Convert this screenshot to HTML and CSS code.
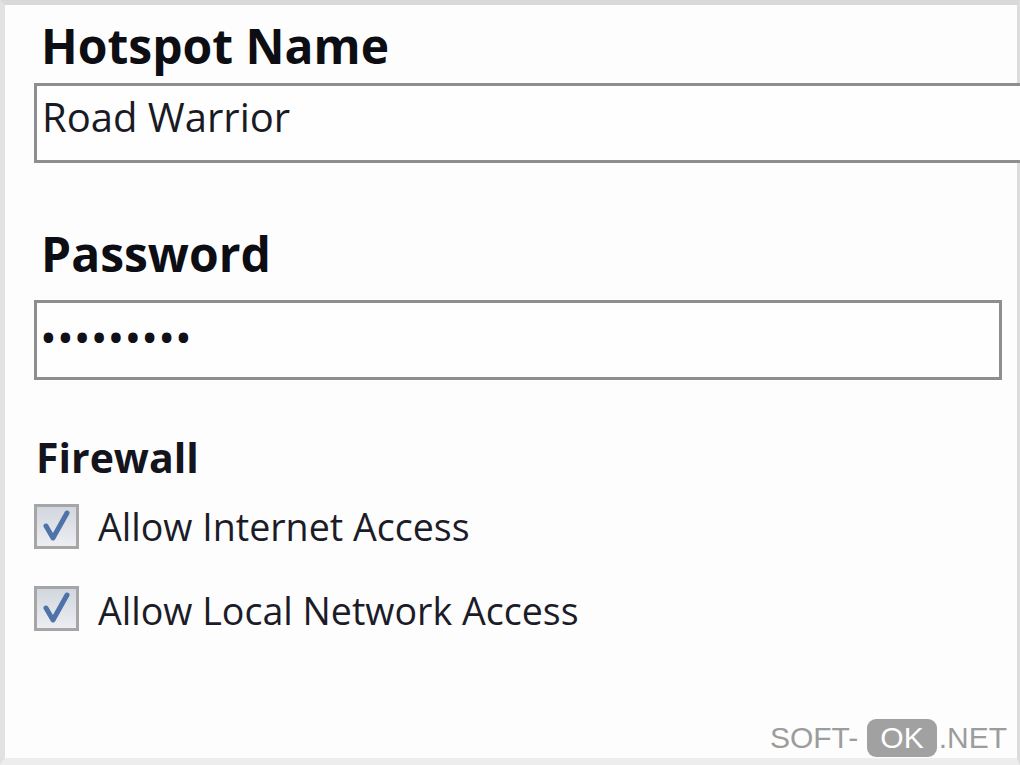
FILE: index.html
```html
<!DOCTYPE html>
<html>
<head>
<meta charset="utf-8">
<link rel="stylesheet" href="styles.css">
</head>
<body>
<div class="frame">
  <div class="panel">
    <section class="field">
      <h2 class="label">Hotspot Name</h2>
      <div class="input input-wide">Road Warrior</div>
    </section>
    <section class="field field-pass">
      <h2 class="label">Password</h2>
      <div class="input input-pass"><span class="dots">•••••••••</span></div>
    </section>
    <section class="firewall">
      <h3 class="sub">Firewall</h3>
      <div class="check">
        <span class="box"><svg viewBox="0 0 39 39" width="39" height="39"><path d="M9 19 L16 31 L30 6" fill="none" stroke="#4f73a8" stroke-width="5" stroke-linecap="round" stroke-linejoin="round"/></svg></span>
        <span class="check-text">Allow Internet Access</span>
      </div>
      <div class="check check-second">
        <span class="box"><svg viewBox="0 0 39 39" width="39" height="39"><path d="M9 19 L16 31 L30 6" fill="none" stroke="#4f73a8" stroke-width="5" stroke-linecap="round" stroke-linejoin="round"/></svg></span>
        <span class="check-text">Allow Local Network Access</span>
      </div>
    </section>
  </div>
  <div class="watermark"><span>SOFT-</span><span class="ok">OK</span><span>.NET</span></div>
</div>
</body>
</html>
```

FILE: styles.css
```css
html, body {
  margin: 0;
  padding: 0;
  width: 1020px;
  height: 765px;
  overflow: hidden;
  background: #ececec;
}
.frame {
  position: relative;
  box-sizing: border-box;
  width: 1020px;
  height: 765px;
  border-top: 5px solid #d9d9d9;
  border-left: 5px solid #e2e2e2;
  border-right: 3px solid #dcdcdc;
  border-bottom: 7px solid #ededed;
  background: #fdfdfd;
}
.panel {
  padding: 13px 0 0 29px;
  font-family: "Open Sans", "Liberation Sans", sans-serif;
  color: #111;
}
.label {
  margin: 0;
  padding-left: 7px;
  font-size: 48px;
  font-weight: 700;
  line-height: 56px;
  color: #0d0d14;
}
.input {
  box-sizing: border-box;
  margin-top: 9px;
  height: 80px;
  border: 3px solid #8e8e8e;
  background: #fefefe;
  padding-left: 5px;
  font-size: 40px;
  line-height: 61px;
  color: #1a1a24;
}
.input-wide {
  width: 1010px;
}
.field-pass {
  margin-top: 63px;
}
.input-pass {
  width: 968px;
  margin-top: 18px;
  line-height: 64px;
}
.dots {
  font-size: 34px;
  font-weight: 700;
  letter-spacing: 4.1px;
  color: #101018;
}
.firewall {
  margin-top: 53px;
}
.sub {
  margin: 0;
  padding-left: 2px;
  font-size: 41px;
  font-weight: 700;
  line-height: 48px;
  color: #14141c;
}
.check {
  display: flex;
  align-items: center;
  gap: 19px;
  margin-top: 23px;
  height: 45px;
}
.check-second {
  margin-top: 37px;
}
.box {
  box-sizing: border-box;
  width: 45px;
  height: 45px;
  border: 3px solid #a6a6a6;
  background: linear-gradient(#d2d6de, #eceef2);
  display: flex;
}
.check-text {
  font-size: 37.6px;
  line-height: 45px;
  color: #1c1c28;
}
.check-second .check-text {
  padding-top: 4px;
}
.watermark {
  position: absolute;
  right: 10px;
  bottom: 1px;
  display: flex;
  align-items: center;
  font-family: "Liberation Sans", Arial, sans-serif;
  font-size: 30px;
  color: #9c9c9c;
}
.ok {
  background: #a1a1a1;
  color: #fff;
  border-radius: 9px;
  padding: 0 13px;
  margin: 0 2px 0 9px;
  line-height: 38px;
}
```
